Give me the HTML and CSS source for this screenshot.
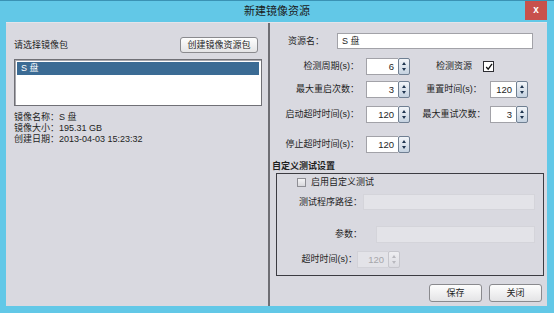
FILE: index.html
```html
<!DOCTYPE html>
<html lang="zh-CN">
<head>
<meta charset="utf-8">
<title>新建镜像资源</title>
<link rel="stylesheet" href="styles.css">
</head>
<body>
<div class="window">
  <div class="titlebar">
    <span class="title-spacer"></span>
    <span class="title">新建镜像资源</span>
    <span class="close">x</span>
  </div>
  <div class="client">
    <div class="left">
      <div class="left-top">
        <span>请选择镜像包</span>
        <span class="btn btn-create">创建镜像资源包</span>
      </div>
      <div class="list">
        <div class="item sel">S 盘</div>
      </div>
      <div class="info">
        <div>镜像名称：S 盘</div>
        <div>镜像大小：195.31 GB</div>
        <div>创建日期：2013-04-03 15:23:32</div>
      </div>
    </div>
    <div class="right">
      <div class="row row-name">
        <span class="l-name">资源名：</span>
        <span class="input name-input">S 盘</span>
      </div>
      <div class="srow r1">
        <span class="l1">检测周期(s)：</span>
        <span class="spin sp1"><span class="spin-val">6</span><span class="spin-btn"><i class="up"></i><i class="dn"></i></span></span>
        <span class="l2">检测资源</span>
        <span class="check checked"><svg viewBox="0 0 10 10" width="8" height="8"><path d="M1.5 5 L4 7.8 L8.8 1.2" fill="none" stroke="#111" stroke-width="1.6"/></svg></span>
      </div>
      <div class="srow r2">
        <span class="l1">最大重启次数：</span>
        <span class="spin sp1"><span class="spin-val">3</span><span class="spin-btn"><i class="up"></i><i class="dn"></i></span></span>
        <span class="l2">重置时间(s)：</span>
        <span class="spin sp2"><span class="spin-val">120</span><span class="spin-btn"><i class="up"></i><i class="dn"></i></span></span>
      </div>
      <div class="srow r3">
        <span class="l1">启动超时时间(s)：</span>
        <span class="spin sp1"><span class="spin-val">120</span><span class="spin-btn"><i class="up"></i><i class="dn"></i></span></span>
        <span class="l2">最大重试次数：</span>
        <span class="spin sp2"><span class="spin-val">3</span><span class="spin-btn"><i class="up"></i><i class="dn"></i></span></span>
      </div>
      <div class="srow r4">
        <span class="l1">停止超时时间(s)：</span>
        <span class="spin sp1"><span class="spin-val">120</span><span class="spin-btn"><i class="up"></i><i class="dn"></i></span></span>
      </div>
      <div class="group-title">自定义测试设置</div>
      <div class="group">
        <div class="g-check">
          <span class="check plain"></span>
          <span class="g-check-text">启用自定义测试</span>
        </div>
        <div class="g-row g-path">
          <span class="g-lbl">测试程序路径：</span>
          <span class="input disabled path-input"></span>
        </div>
        <div class="g-row g-param">
          <span class="g-lbl">参数：</span>
          <span class="input disabled param-input"></span>
        </div>
        <div class="g-row g-timeout">
          <span class="g-lbl g-lbl-t">超时时间(s)：</span>
          <span class="spin sp3 dis"><span class="spin-val">120</span><span class="spin-btn"><i class="up"></i><i class="dn"></i></span></span>
        </div>
      </div>
      <div class="actions">
        <span class="btn btn-act">保存</span>
        <span class="btn btn-act">关闭</span>
      </div>
    </div>
  </div>
</div>
</body>
</html>
```

FILE: styles.css
```css
* { box-sizing: border-box; }
html, body { margin: 0; padding: 0; }
body {
  font-family: "Liberation Sans", "Noto Sans CJK SC", sans-serif;
  font-size: 9px;
  line-height: 11px;
  color: #1e1e1e;
  background: #62c8e7;
}
.window {
  width: 554px;
  height: 313px;
  background: #62c8e7;
  display: flex;
  flex-direction: column;
  overflow: hidden;
}
.titlebar {
  height: 22px;
  border-top: 1px solid #3a92b4;
  display: grid;
  grid-template-columns: 1fr auto 1fr;
  align-items: start;
}
.title {
  font-size: 11px;
  line-height: 21px;
  color: #1b1b1b;
}
.close {
  justify-self: end;
  margin-right: 7px;
  width: 22px;
  height: 19px;
  background: #c8514c;
  color: #fff;
  font-weight: bold;
  font-size: 10px;
  line-height: 17px;
  text-align: center;
}
.client {
  margin: 0 7px 7px 6px;
  flex: 1;
  background: #d9d9e0;
  display: flex;
  border-top: 1px solid #e4e4ea;
}
.left {
  width: 264px;
  padding: 14px 6px 0 8px;
  border-right: 2px solid #6e6e74;
}
.left-top {
  display: flex;
  justify-content: space-between;
  align-items: center;
  height: 16px;
}
.btn {
  display: flex;
  align-items: center;
  justify-content: center;
  background: linear-gradient(#fdfdfd, #e4e4e6);
  border: 1px solid #8a8a8e;
  border-radius: 3px;
  color: #1e1e1e;
}
.btn-create {
  width: 78px;
  height: 16px;
  margin-right: 4px;
}
.list {
  margin-top: 6px;
  height: 47px;
  background: #fff;
  border: 1px solid #707076;
  box-shadow: inset 1px 1px 0 #a8a8ae;
  padding: 2px;
}
.item {
  height: 13px;
  line-height: 13px;
  padding-left: 4px;
}
.item.sel {
  background: #3b6b94;
  color: #fff;
}
.info {
  margin-top: 6px;
}
.right {
  flex: 1;
  padding-top: 10px;
}
.row {
  display: flex;
  align-items: center;
}
.row-name { height: 16px; }
.l-name {
  width: 54px;
  text-align: right;
}
.input {
  display: flex;
  align-items: center;
  background: #fff;
  border: 1px solid #a2a2a8;
  padding-left: 4px;
}
.name-input {
  margin-left: 13px;
  width: 196px;
  height: 16px;
}
.srow {
  display: flex;
  align-items: center;
  height: 17px;
}
.r1 { margin-top: 9px; }
.r2 { margin-top: 6px; }
.r3 { margin-top: 8px; }
.r4 { margin-top: 13px; }
.l1 {
  width: 89px;
  text-align: right;
}
.l2 {
  width: 72px;
  margin-left: 8px;
  text-align: center;
}
.spin {
  display: flex;
  height: 17px;
}
.sp1 { width: 44px; margin-left: 7px; }
.sp2 { width: 38px; }
.sp3 { width: 43px; }
.spin-val {
  flex: 1;
  background: #fff;
  border: 1px solid #a2a2a8;
  border-right: none;
  text-align: right;
  padding-right: 4px;
  line-height: 15px;
  font-size: 9.5px;
}
.spin-btn {
  width: 12px;
  border: 1px solid #6f7f92;
  border-radius: 2px;
  background: linear-gradient(#f2f5f9, #c5d2e0);
  display: flex;
  flex-direction: column;
  align-items: center;
  justify-content: space-evenly;
}
.spin-btn i {
  display: block;
  width: 0;
  height: 0;
  border-left: 2.5px solid transparent;
  border-right: 2.5px solid transparent;
}
.spin-btn .up { border-bottom: 3px solid #1f3550; }
.spin-btn .dn { border-top: 3px solid #1f3550; }
.spin.dis .spin-val {
  background: #e3e3e8;
  border-color: #d2d2d8;
  color: #a6a6aa;
}
.spin.dis .spin-btn {
  border-color: #c6c6cc;
  background: linear-gradient(#eeeef1, #dcdce2);
}
.spin.dis .spin-btn .up { border-bottom-color: #b8b8be; }
.spin.dis .spin-btn .dn { border-top-color: #b8b8be; }
.check {
  display: flex;
  align-items: center;
  justify-content: center;
}
.check.checked {
  width: 11px;
  height: 11px;
  margin-left: -7px;
  background: #fff;
  border: 1px solid #2e2e34;
}
.check.plain {
  width: 9px;
  height: 9px;
  background: linear-gradient(#f4f4f6, #d8d8dc);
  border: 1px solid #8e8e94;
}
.group-title {
  margin-top: 8px;
  padding-left: 2px;
  font-weight: bold;
}
.group {
  margin: 1px 3px 0 6px;
  height: 103px;
  border: 1px solid #3c3c42;
}
.g-check {
  display: flex;
  align-items: center;
  height: 11px;
  margin-top: 3px;
  padding-left: 20px;
}
.g-check-text { margin-left: 5px; }
.g-row {
  display: flex;
  align-items: center;
}
.g-lbl {
  width: 85px;
  text-align: right;
}
.input.disabled {
  background: #e3e3e8;
  border-color: #d4d4da;
}
.g-path { margin-top: 6px; height: 16px; }
.path-input { width: 172px; height: 16px; margin-left: 1px; }
.g-param { margin-top: 16px; height: 17px; }
.param-input { width: 159px; height: 17px; margin-left: 14px; }
.g-timeout { margin-top: 8px; height: 17px; }
.g-lbl-t { width: 80px; }
.actions {
  display: flex;
  justify-content: flex-end;
  gap: 7px;
  margin-top: 8px;
  padding-right: 5px;
}
.btn-act {
  width: 53px;
  height: 18px;
}
```
